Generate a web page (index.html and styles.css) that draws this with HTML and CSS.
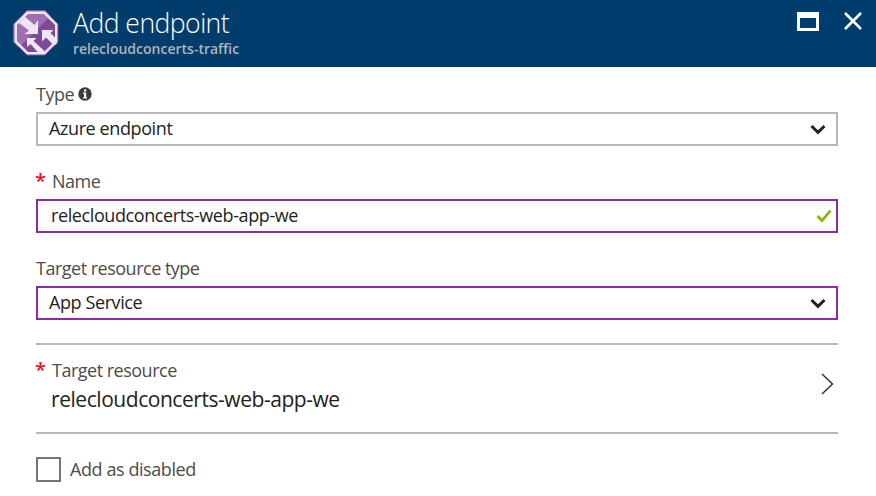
FILE: index.html
```html
<!DOCTYPE html>
<html lang="en">
<head>
<meta charset="utf-8">
<title>Add endpoint</title>
<link rel="stylesheet" href="styles.css">
</head>
<body>
<header class="header">
  <svg class="logo" width="46" height="46" viewBox="0 0 46 46">
    <path d="M14 .5h18L45.500 14v18L32 45.500H14L.5 32V14z" fill="#8150a0"/>
    <path d="M14 .5h18L37 5.500 5 37 .5 32V14z" fill="#a776b8"/>
    <path d="M14.500 3h17L43 14.500v17L31.500 43h-17L3 31.500v-17z" fill="#804998"/>
    <path d="M14.500 3h17L36 7.500 7.500 36 3 31.500v-17z" fill="#a06fb2"/>
    <path d="M14.500 2.800h17l11.700 11.700v17l-11.700 11.700h-17l-11.700-11.700v-17z" fill="none" stroke="#eee6f2" stroke-width="2.400"/>
    <path d="M6 13l6-6L21.500 15l3.500-5V24H11.500l4.500-3.500zM29 20h11.500l-3 3 6 6v5.500L40.500 35 33 27.500l-4 4zM14 28h9.500l-3 3L31.500 41l-1.500 2.500h-4L17.500 34 14 37z" fill="#eee6f2"/>
  </svg>
  <div class="heading">
    <h1 class="title">Add endpoint</h1>
    <p class="subtitle">relecloudconcerts-traffic</p>
  </div>
  <div class="actions">
    <svg width="22" height="19" viewBox="0 0 22 19"><path fill="#fff" fill-rule="evenodd" d="M0 0h22v19H0zM3 6v10h16V6z"/></svg>
    <svg width="18" height="18" viewBox="0 0 18 18"><path d="M1 1l16 16M17 1L1 17" stroke="#fff" stroke-width="2.600"/></svg>
  </div>
</header>
<main class="form">
  <div class="label"><span>Type</span>
    <svg class="info" width="14" height="14" viewBox="0 0 14 14"><circle cx="7" cy="7" r="6.700" fill="#3c3c3c"/><path d="M6 2.500h2.200v2H6zM5 5.500h3.200v4.700H9v1.300H5v-1.300h1V6.800H5z" fill="#fff"/></svg>
  </div>
  <div class="box"><span>Azure endpoint</span>
    <svg width="16" height="11" viewBox="0 0 16 11"><path d="M1.500 2L8 8.300 14.500 2" fill="none" stroke="#222" stroke-width="3"/></svg>
  </div>
  <div class="label"><span class="star">*</span><span>Name</span></div>
  <div class="box active name"><span>relecloudconcerts-web-app-we</span>
    <svg width="16" height="14" viewBox="0 0 16 14"><path d="M1.500 7l4.500 4.700L14.500 1.500" fill="none" stroke="#7fba00" stroke-width="2.600"/></svg>
  </div>
  <div class="label"><span>Target resource type</span></div>
  <div class="box active"><span>App Service</span>
    <svg width="16" height="11" viewBox="0 0 16 11"><path d="M1.500 2L8 8.300 14.500 2" fill="none" stroke="#222" stroke-width="3"/></svg>
  </div>
  <section class="resource">
    <div>
      <div class="resource-label"><span class="star">*</span><span>Target resource</span></div>
      <div class="resource-value">relecloudconcerts-web-app-we</div>
    </div>
    <svg width="13" height="22" viewBox="0 0 13 22"><path d="M1 1l10.500 10L1 21" fill="none" stroke="#333" stroke-width="1.500"/></svg>
  </section>
  <div class="disabled"><span class="checkbox"></span><span>Add as disabled</span></div>
</main>
</body>
</html>
```

FILE: styles.css
```css
* { box-sizing: border-box; }
body {
  margin: 0;
  height: 496px;
  overflow: hidden;
  background: #fff;
  color: #222;
  font: 18px/24px "Open Sans", "Noto Sans", sans-serif;
  letter-spacing: -0.4px;
}
svg { display: block; flex: none; }
span { white-space: nowrap; }
.header {
  display: flex;
  height: 67px;
  padding: 0 14px 0 13px;
  background: #003c6c;
}
.logo { margin-top: 10px; }
.heading { margin-left: 14px; padding-top: 6px; }
.title {
  margin: 0;
  color: #fff;
  font-size: 26.6px;
  font-weight: 300;
  line-height: 34px;
  letter-spacing: -0.55px;
}
.subtitle {
  margin: 0;
  color: #b0b4b8;
  font-size: 14px;
  font-weight: 600;
  line-height: 18px;
  letter-spacing: 0;
}
.actions {
  display: flex;
  gap: 25px;
  margin: 12px 0 0 auto;
}
.form { padding: 0 38px 0 36px; }
.label {
  display: flex;
  align-items: center;
  height: 53px;
  padding-top: 17px;
  color: #4c4c4c;
  letter-spacing: -0.5px;
}
.label:first-child { height: 45px; padding-top: 9px; }
.info { margin-left: 4px; }
.star {
  width: 16px;
  margin-left: -1px;
  margin-right: 1px;
  color: #e81123;
  font-size: 20px;
  font-weight: 600;
}
.box {
  display: flex;
  align-items: center;
  justify-content: space-between;
  height: 34px;
  padding: 0 10px 0 11px;
  border: 2px solid #b8b8b8;
}
.box span { margin-bottom: 2px; }
.active { border-color: #8a2da5; }
.name { padding: 0 4px 0 13px; }
.resource {
  display: flex;
  align-items: center;
  justify-content: space-between;
  height: 91px;
  margin-top: 23px;
  padding: 0 4px 10px 0;
  border-top: 2px solid #b8b8b8;
  border-bottom: 2px solid #b8b8b8;
}
.resource-label {
  display: flex;
  height: 26px;
  margin-top: 5px;
  color: #4c4c4c;
  letter-spacing: -0.5px;
}
.resource-value {
  margin-left: 15px;
  font-size: 21px;
  line-height: 30px;
  letter-spacing: -0.45px;
}
.disabled {
  display: flex;
  align-items: flex-start;
  gap: 9px;
  margin-top: 23px;
  color: #4c4c4c;
  letter-spacing: -0.42px;
}
.checkbox { width: 25px; height: 25px; border: 2px solid #767676; }
```
